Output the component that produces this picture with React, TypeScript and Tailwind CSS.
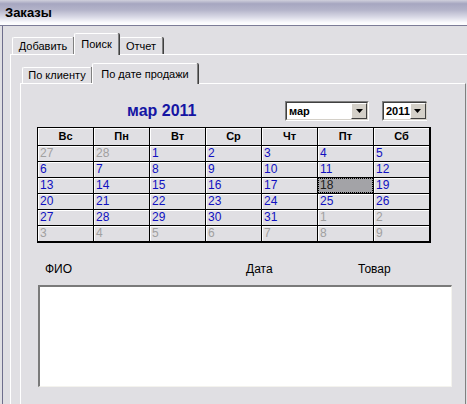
import React from "react";

type Day = { n: number; other?: boolean; selected?: boolean };

const headers = ["Вс", "Пн", "Вт", "Ср", "Чт", "Пт", "Сб"];

const weeks: Day[][] = [
  [{ n: 27, other: true }, { n: 28, other: true }, { n: 1 }, { n: 2 }, { n: 3 }, { n: 4 }, { n: 5 }],
  [{ n: 6 }, { n: 7 }, { n: 8 }, { n: 9 }, { n: 10 }, { n: 11 }, { n: 12 }],
  [{ n: 13 }, { n: 14 }, { n: 15 }, { n: 16 }, { n: 17 }, { n: 18, selected: true }, { n: 19 }],
  [{ n: 20 }, { n: 21 }, { n: 22 }, { n: 23 }, { n: 24 }, { n: 25 }, { n: 26 }],
  [{ n: 27 }, { n: 28 }, { n: 29 }, { n: 30 }, { n: 31 }, { n: 1, other: true }, { n: 2, other: true }],
  [
    { n: 3, other: true },
    { n: 4, other: true },
    { n: 5, other: true },
    { n: 6, other: true },
    { n: 7, other: true },
    { n: 8, other: true },
    { n: 9, other: true },
  ],
];

function Tab({ label, width, active, small }: { label: string; width: number; active?: boolean; small?: boolean }) {
  const h = active ? (small ? "h-[21px]" : "h-[22px]") : small ? "h-[16px]" : "h-[17px]";
  return (
    <div
      style={{ width }}
      className={
        "shrink-0 flex justify-center border-l border-t border-white rounded-tl-[2px] rounded-tr-[2px] border-r border-r-[#808080] shadow-[1px_0_0_#404040] bg-[#e0dfe3] text-[11px] text-black " +
        h +
        (active ? " relative z-10 -mb-px items-start pt-[2px]" : " items-center")
      }
    >
      {label}
    </div>
  );
}

function Select({ value, width }: { value: string; width: number }) {
  return (
    <div
      style={{ width }}
      className="shrink-0 h-[20px] flex border-t border-l border-[#808080] border-b border-r border-b-white border-r-white bg-white"
    >
      <div className="flex flex-1 border-t border-l border-[#404040] border-b border-r border-b-[#d4d0c8] border-r-[#d4d0c8]">
        <span className="flex-1 pl-[2px] text-[11px] font-bold leading-[16px] text-black">{value}</span>
        <div className="w-[16px] h-[16px] flex items-center justify-center bg-[#d4d0c8] border-t border-l border-white border-b border-r border-b-[#404040] border-r-[#404040]">
          <svg width="7" height="4" viewBox="0 0 7 4">
            <path d="M0 0h7L3.5 4z" fill="#000" />
          </svg>
        </div>
      </div>
    </div>
  );
}

export default function App() {
  return (
    <div className="w-[467px] h-[404px] overflow-hidden bg-[#e0dfe3] font-['Liberation_Sans',Arial,sans-serif]">
      {/* title bar */}
      <div className="h-[26px] border-b border-[#7c7c98] bg-[linear-gradient(to_bottom,#d0d0dc_0%,#a6a6c0_15%,#b4b4ca_40%,#dcdce8_70%,#fafafd_90%,#ffffff_100%)] flex items-center pl-[5px]">
        <span className="text-[13px] font-bold text-black">Заказы</span>
      </div>

      <div className="flex h-[378px]">
        <div className="shrink-0 w-[2px] bg-[#e0dfe3]" />
        <div className="shrink-0 w-px bg-[#6e6e8c]" />

        <div className="shrink-0 pl-[7px] pt-[7px]">
          {/* outer tabs */}
          <div className="flex items-end pl-[2px] h-[21px]">
            <Tab label="Добавить" width={62} />
            <Tab label="Поиск" width={45} active />
            <Tab label="Отчет" width={44} />
          </div>

          <div className="w-[480px] h-[400px] border-t border-l border-white pl-[9px] pt-[8px]">
            {/* inner tabs */}
            <div className="flex items-end pl-[2px] h-[20px]">
              <Tab label="По клиенту" width={70} small />
              <Tab label="По дате продажи" width={106} small active />
            </div>

            <div className="w-[446px] h-[400px] border-t border-l border-white border-r border-r-[#808080] pl-[16px] pt-[17px]">
              <div className="flex items-center h-[20px]">
                <span className="ml-[90px] w-[158px] shrink-0 text-[16px] font-bold text-[#1515a3] leading-[20px]">
                  мар 2011
                </span>
                <Select value="мар" width={84} />
                <div className="shrink-0 w-[13px]" />
                <Select value="2011" width={45} />
              </div>

              {/* calendar */}
              <div className="mt-[6px] w-[394px] border border-black">
                <div className="grid grid-cols-[repeat(7,56px)]">
                  {headers.map((h) => (
                    <div
                      key={h}
                      className="h-[17px] box-content border-r border-b border-black shadow-[inset_1px_1px_0_#fff] flex items-center justify-center text-[11px] font-bold text-black"
                    >
                      {h}
                    </div>
                  ))}
                  {weeks.flat().map((d, i) => (
                    <div
                      key={i}
                      className="h-[15px] box-content border-r border-b border-black shadow-[inset_1px_1px_0_#fff]"
                    >
                      {d.selected ? (
                        <div className="h-full bg-[#a3a3a7] border border-dotted border-black text-[12px] leading-[13px] text-[#202020] pl-[1px]">
                          {d.n}
                        </div>
                      ) : (
                        <div
                          className={
                            "h-full pl-[2px] text-[12px] leading-[15px] " +
                            (d.other ? "text-[#a0a0a0]" : "text-[#1010c0]")
                          }
                        >
                          {d.n}
                        </div>
                      )}
                    </div>
                  ))}
                </div>
              </div>

              {/* list */}
              <div className="mt-[19px] flex h-[14px] text-[12px] leading-[14px] text-black">
                <span className="ml-[8px] w-[201px]">ФИО</span>
                <span className="w-[112px]">Дата</span>
                <span>Товар</span>
              </div>
              <div className="mt-[9px] ml-px w-[414px] h-[102px] bg-white border-t-2 border-l-2 border-[#7a7a7a] border-b border-r border-b-[#f4f3ee] border-r-[#f4f3ee]" />
            </div>
          </div>
        </div>
      </div>
    </div>
  );
}
